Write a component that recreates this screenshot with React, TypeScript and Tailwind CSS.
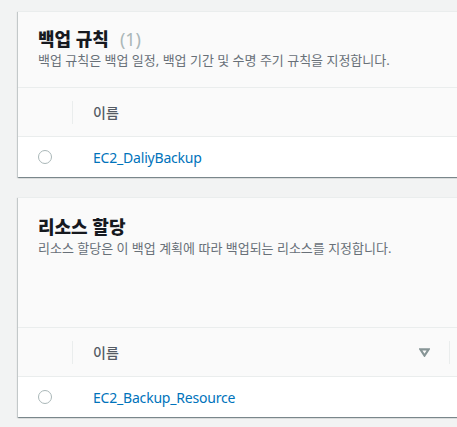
import React from "react";

const font = { fontFamily: '"Noto Sans", "Noto Sans CJK KR", sans-serif' };

function Header({ title, count, desc, h, pt }: { title: string; count?: string; desc: string; h: string; pt: string }) {
  return (
    <div className={`${h} ${pt} border-b border-[#eaeded] bg-[#fafafa] px-[20px]`}>
      <div className="flex items-baseline gap-[11px] text-[18px] leading-[22px]">
        <span className="font-extrabold text-[#16191f]">{title}</span>
        {count && <span className="text-[#aab7b8]">{count}</span>}
      </div>
      <div className="mt-[2px] text-[13px] leading-[17px] text-[#687078]">{desc}</div>
    </div>
  );
}

function ColHeader({ sort }: { sort?: boolean }) {
  return (
    <div className="flex h-[49px] items-center border-b border-[#eaeded] bg-[#fafafa]">
      <div className="flex h-full w-[55px] shrink-0 items-center justify-end">
        <div className="h-[23px] w-px bg-[#eaeded]" />
      </div>
      <div className="flex w-[376px] shrink-0 items-center pl-[20px] pr-[19px] text-[14px] font-medium text-[#545b64]">
        <span>이름</span>
        {sort && (
          <svg width="11" height="9" viewBox="0 0 11 9" className="ml-auto">
            <polygon points="1.3,1.3 9.7,1.3 5.5,7.6" fill="none" stroke="#879596" strokeWidth="2.2" strokeLinejoin="miter" />
          </svg>
        )}
      </div>
      {sort && <div className="h-[23px] w-px shrink-0 bg-[#eaeded]" />}
    </div>
  );
}

function Row({ name }: { name: string }) {
  return (
    <div className="flex h-[40px] items-center bg-white">
      <div className="flex w-[55px] items-center pl-[20px]">
        <div className="h-[14px] w-[14px] rounded-full border border-[#aab7b8] bg-white" />
      </div>
      <div className="pl-[20px] text-[14px] tracking-[-0.2px] text-[#0073bb]">{name}</div>
    </div>
  );
}

const cardShadow =
  "shadow-[0_1px_1px_0_rgba(0,28,36,0.3),1px_1px_1px_0_rgba(0,28,36,0.15),-1px_1px_1px_0_rgba(0,28,36,0.15)]";

export default function App() {
  return (
    <div className="h-[427px] w-[457px] overflow-hidden bg-[#f2f3f3] pt-[11px]" style={font}>
      <div className={`ml-[18px] w-[460px] border-t border-[#eaeded] ${cardShadow}`}>
        <Header
          h="h-[76px]"
          pt="pt-[16px]"
          title="백업 규칙"
          count="(1)"
          desc="백업 규칙은 백업 일정, 백업 기간 및 수명 주기 규칙을 지정합니다."
        />
        <ColHeader />
        <Row name="EC2_DaliyBackup" />
      </div>
      <div className={`ml-[18px] mt-[20px] w-[460px] border-t border-[#eaeded] ${cardShadow}`}>
        <Header
          h="h-[130px]"
          pt="pt-[18px]"
          title="리소스 할당"
          desc="리소스 할당은 이 백업 계획에 따라 백업되는 리소스를 지정합니다."
        />
        <ColHeader sort />
        <Row name="EC2_Backup_Resource" />
      </div>
    </div>
  );
}
